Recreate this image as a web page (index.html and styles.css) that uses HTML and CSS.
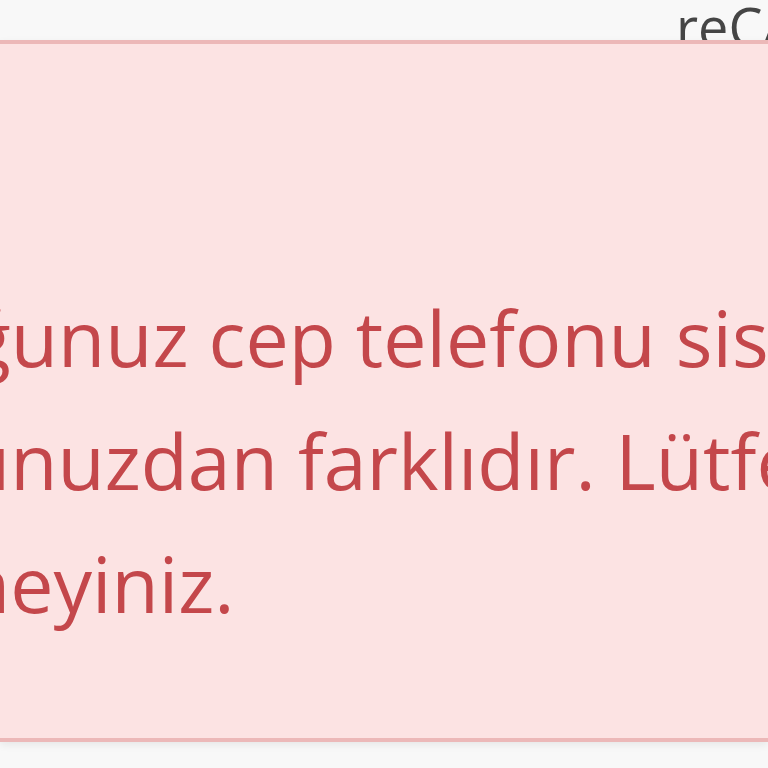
FILE: index.html
```html
<!DOCTYPE html>
<html lang="tr">
<head>
<meta charset="utf-8">
<title>Uyarı</title>
<link rel="stylesheet" href="styles.css">
</head>
<body>
<div class="page">
  <div class="top"><span class="brand">reCAPTCHA</span></div>
  <div class="alert">
    <div class="msg">
      <div class="line l1">ğunuz cep telefonu sistemde</div>
      <div class="line l2">unuzdan farklıdır. Lütfen</div>
      <div class="line l3">neyiniz.</div>
    </div>
  </div>
  <div class="below"></div>
</div>
</body>
</html>
```
FILE: styles.css
```css
html, body {
  margin: 0;
  padding: 0;
  background: #f8f8f8;
  overflow: hidden;
}
.page {
  width: 768px;
  height: 768px;
  overflow: hidden;
  font-family: "Open Sans", "Noto Sans", sans-serif;
}
.top {
  height: 40px;
  overflow: hidden;
  white-space: nowrap;
  padding-left: 676px;
}
.brand {
  display: block;
  font-size: 54px;
  line-height: 52px;
  color: #454545;
}
.alert {
  background: #fce3e3;
  border-top: 4px solid #ecb8b8;
  border-bottom: 4px solid #ecb8b8;
  box-shadow: 0 3px 8px rgba(0, 0, 0, 0.07);
  padding: 232px 0 93px 0;
  overflow: hidden;
}
.msg {
  color: #c4474b;
  font-size: 77px;
  line-height: 123px;
  white-space: nowrap;
}
.line { display: block; }
.l1 { margin-left: -31px; }
.l2 { margin-left: -37px; }
.l3 { margin-left: -37px; }
```
